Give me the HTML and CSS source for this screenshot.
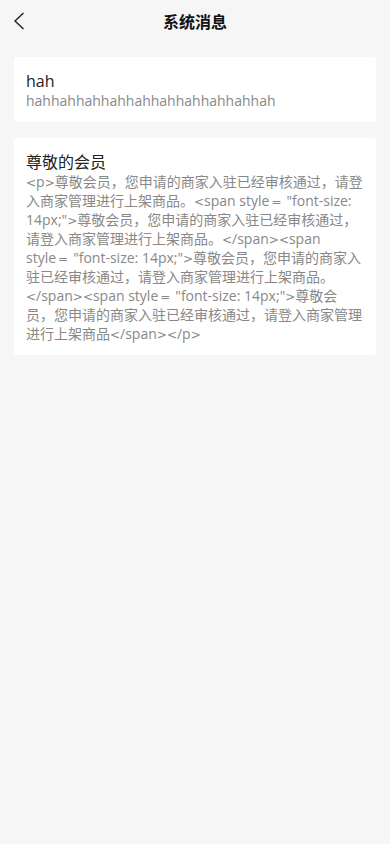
FILE: index.html
```html
<!DOCTYPE html>
<html lang="zh-CN">
<head>
    <meta charset="UTF-8">
    <title>系统消息</title>
    <link rel="stylesheet" href="styles.css">
</head>
<body>
<div class="page">
    <!--顶部导航-->
    <div class="nav">
        <span class="back">
            <svg width="12" height="18" viewBox="0 0 12 18"><path d="M10.5 1 L2 9 L10.5 17" fill="none" stroke="#222" stroke-width="1.4"/></svg>
        </span>
        <h1 class="nav-title">系统消息</h1>
    </div>
    <!--消息列表-->
    <ul class="msg-list">
        <li class="msg">
            <p class="msg-title">hah</p>
            <p class="msg-text">hahhahhahhahhahhahhahhahhahhah</p>
        </li>
        <li class="msg">
            <p class="msg-title">尊敬的会员</p>
            <!--后台返回的原始html,符号用宽字体显示-->
            <p class="msg-text"><i>&lt;</i>p<i>&gt;</i>尊敬会员，您申请的商家入驻已经审核通过，请登入商家管理进行上架商品。<i>&lt;</i>span style<i class="eq">=</i>"font-size: 14px;"<i>&gt;</i>尊敬会员，您申请的商家入驻已经审核通过，请登入商家管理进行上架商品。<i>&lt;</i>/span<i>&gt;</i><i>&lt;</i>span style<i class="eq">=</i>"font-size: 14px;"<i>&gt;</i>尊敬会员，您申请的商家入驻已经审核通过，请登入商家管理进行上架商品。<i>&lt;</i>/span<i>&gt;</i><i>&lt;</i>span style<i class="eq">=</i>"font-size: 14px;"<i>&gt;</i>尊敬会员，您申请的商家入驻已经审核通过，请登入商家管理进行上架商品<i>&lt;</i>/span<i>&gt;</i><i>&lt;</i>/p<i>&gt;</i></p>
        </li>
    </ul>
</div>
</body>
</html>
```
FILE: styles.css
```css
* {
    padding: 0;
    margin: 0;
    list-style: none;
    border: 0;
}

body {
    background: #f6f6f6;
    font-family: "Open Sans", "Noto Sans CJK SC", sans-serif;
    color: #222;
}

.page {
    min-height: 844px;
}

.nav {
    height: 42px;
    display: flex;
    align-items: center;
    justify-content: center;
    position: relative;
}

.back {
    position: absolute;
    left: 13px;
    top: 12px;
    width: 12px;
    height: 18px;
}

.nav-title {
    font-size: 16px;
    font-weight: bold;
    color: #111;
    font-family: "Noto Sans CJK SC", sans-serif;
}

.msg-list {
    padding: 15px 14px 0;
    display: flex;
    flex-direction: column;
    gap: 16px;
}

.msg {
    background: #fff;
    border-radius: 3px;
    padding: 14px 12px 12px;
}

.msg-title {
    font-size: 16px;
    line-height: 20px;
    color: #222;
}

.msg-text {
    font-size: 14px;
    line-height: 19px;
    color: #888;
    word-wrap: break-word;
}

.msg-text i {
    font-style: normal;
    font-family: "DejaVu Sans", sans-serif;
    font-size: 12px;
    line-height: 1;
}

.msg-text .eq {
    margin: 0 5px 0 2px;
}
```
